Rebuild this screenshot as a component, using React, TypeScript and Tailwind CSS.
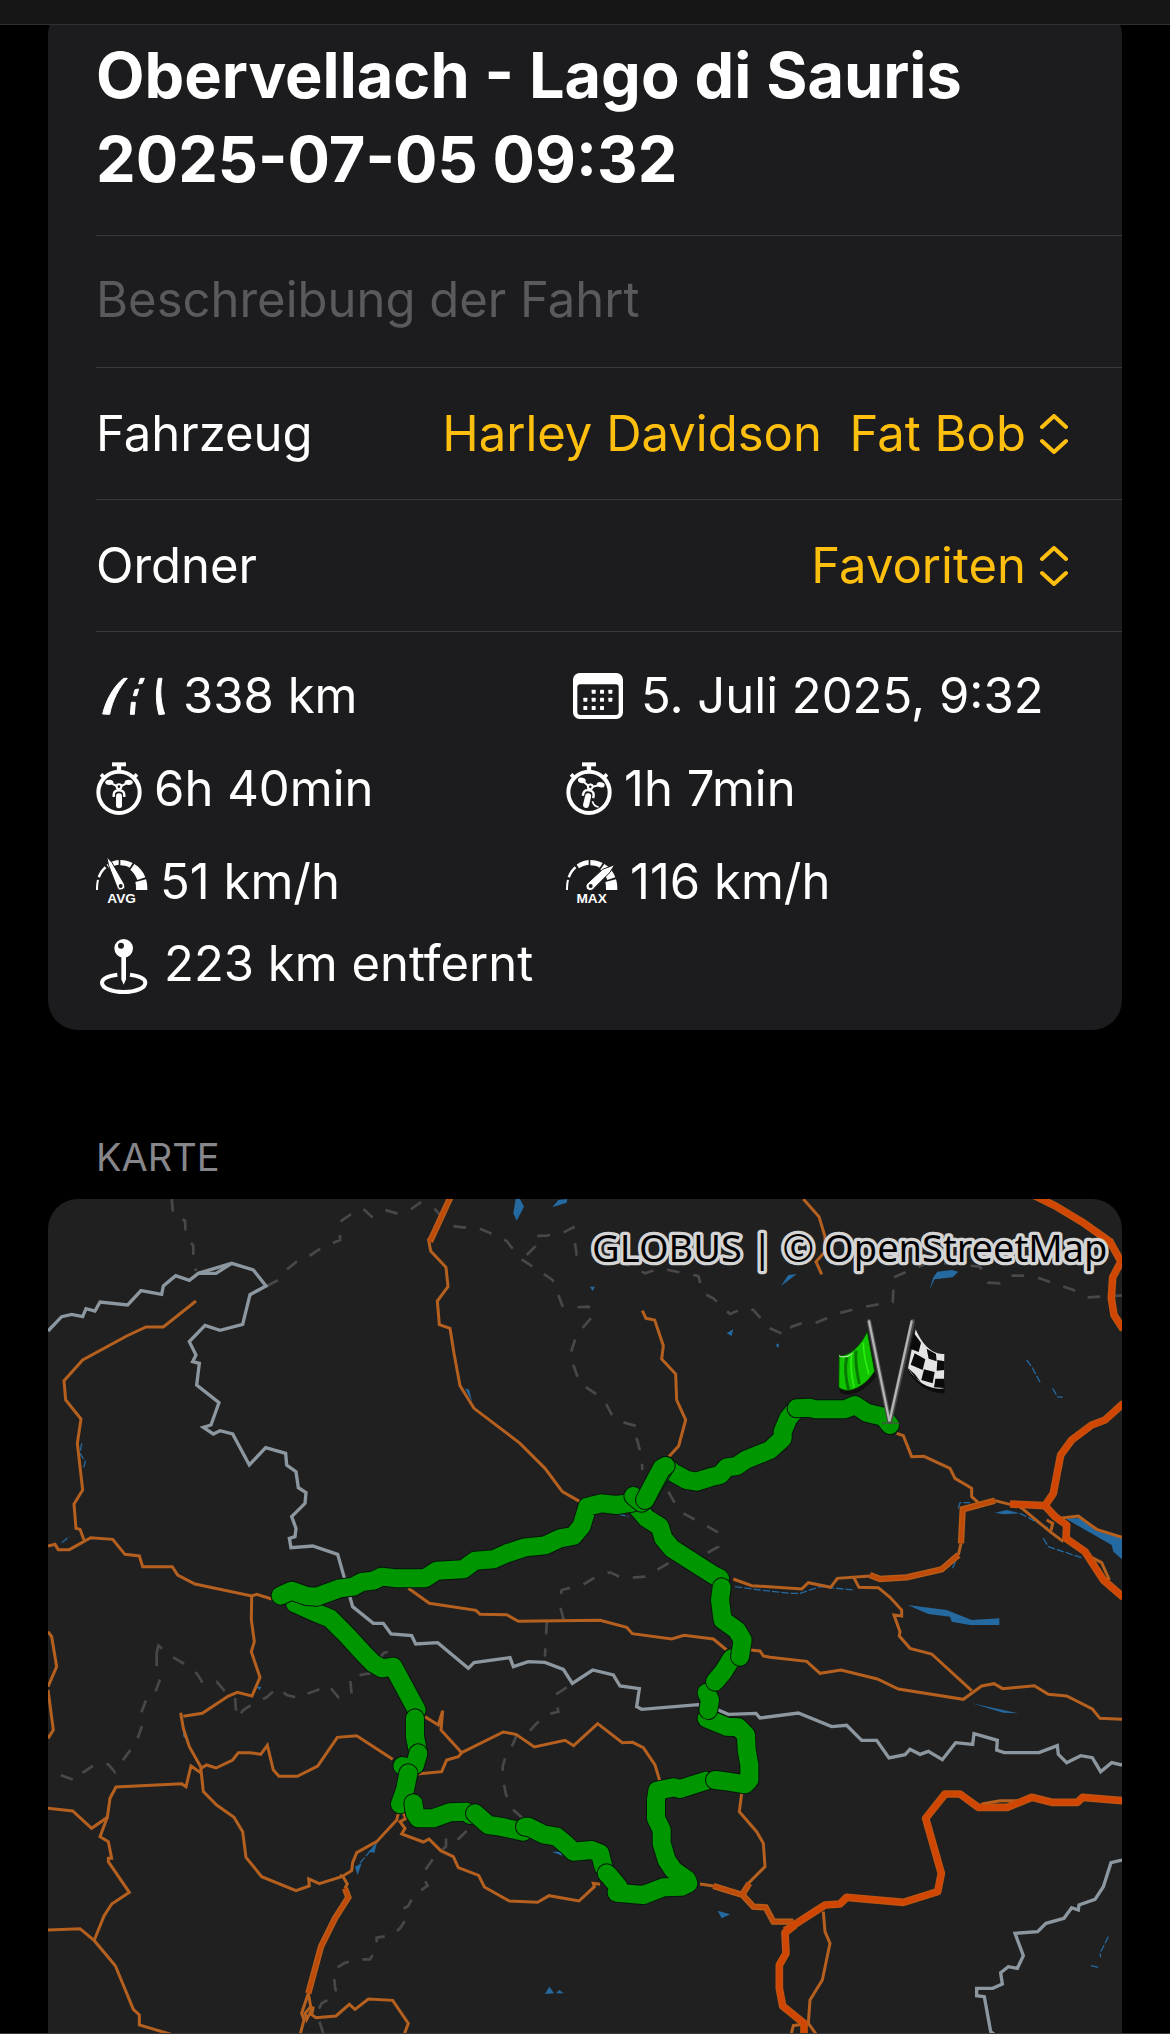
import React from 'react';

const minorRoads = [
  '468,333 370,411 318,411 260,438 128,510 72,572 77,630 123,687 112,760 128,900 102,942 108,1015 120,1018 132,1050',
  '24,1068 45,1063 55,1079 88,1079 152,1043 218,1048 255,1093 298,1098 308,1130 397,1130 413,1155 465,1182 635,1218 650,1213 695,1227',
  '635,1218 634,1290 643,1355 634,1385 660,1462 636,1518 592,1507 565,1518 487,1570 430,1579',
  '422,1568 430,1615 448,1670 482,1730 490,1805 530,1845 582,1882 608,1925 618,2002 665,2060 768,2102 808,2088 806,2067 838,2081 905,2060 935,2042 938,2018 950,1988 1010,1955 1070,1890 1075,1870',
  '24,1325 35,1340 50,1430 24,1490',
  '24,1500 40,1620 24,1645',
  '482,1735 500,1725 528,1734 578,1710 595,1688 630,1688 662,1693 682,1666 700,1740 717,1759 772,1759 833,1728 892,1642 950,1637 1058,1708',
  '482,1748 453,1728 438,1790 425,1781 228,1791 210,1825 202,1882 155,1915 98,1863 24,1855',
  '202,1882 180,1940 205,1955 215,2005 205,2005 205,2015 268,2107 215,2142 192,2178 163,2250',
  '24,2220 120,2216 163,2252 226,2327 280,2458 298,2475 298,2505 400,2535',
  '1090,1870 1098,1885 1080,1895 1095,1915 1085,1932 1150,1956 1167,1947 1202,1982 1240,2000 1255,2033 1316,2056 1333,2091 1408,2133 1493,2137 1527,2117 1617,2133 1663,2090 1660,2080 1680,2083',
  '900,2055 910,2062 922,2082 915,2095',
  '805,2410 785,2470 792,2490 780,2535',
  '805,2410 812,2450 795,2470 800,2488 820,2450 815,2474 828,2483 888,2478 928,2443 945,2458 985,2427 1058,2431 1105,2500 1092,2535',
  '1155,1580 1195,1605 1208,1562 1203,1620 1265,1688 1390,1626 1428,1633 1483,1671 1575,1651 1601,1667 1673,1601 1747,1658 1778,1657 1810,1673 1845,1725 1860,1775',
  '1265,1688 1255,1700 1220,1710 1205,1745 1130,1752',
  '1165,145 1172,183 1218,232 1224,290 1192,333 1198,404 1230,415 1242,490 1260,587 1302,655 1440,760 1515,835 1567,905 1620,935',
  '1807,362 1818,385 1844,390 1870,467 1865,507 1907,552 1910,630 1937,690 1916,768 1885,802',
  '1105,1195 1168,1240 1308,1261 1320,1273 1400,1274 1435,1294 1680,1291 1760,1312 1777,1331 1895,1347 1932,1336 2020,1347 2060,1380',
  '2130,1380 2160,1383 2170,1398 2190,1402 2300,1414 2340,1450 2403,1440 2512,1467 2575,1497 2770,1528 2825,1488 2862,1481 2888,1496 2983,1487 3025,1513 3080,1518 3157,1557 3180,1585 3246,1588',
  '2440,1160 2457,1192 2515,1193 2550,1222 2585,1260 2585,1278 2562,1275 2580,1325 2578,1338 2610,1375 2675,1392 2795,1502',
  '2080,1167 2135,1187 2285,1197 2305,1178 2372,1192 2392,1165 2490,1158',
  '2755,1095 2763,1060',
  '2865,932 2910,943',
  '2570,730 2590,737 2615,800 2652,799 2730,835 2745,865 2795,895 2795,920 2815,938',
  '2930,945 2950,958 3030,1025 3070,1055',
  '3020,990 3038,1000 3033,1022',
  '3060,985 3115,978 3170,1018 3246,1042',
  '3150,1100 3185,1118 3208,1170',
  '2290,27 2337,80 2355,140 2355,185 2328,215 2345,253',
  '2105,1810 2098,1865 2150,1925 2170,1960 2175,2030 2125,2080',
  '1980,2082 2020,2088',
  '2350,2165 2355,2225 2370,2260 2347,2370 2310,2430 2305,2500 2330,2535',
  '2253,2535 2260,2507 2290,2502',
  '2825,1842 2880,1832 2940,1832',
];

const primaryRoads = [
  '1232,20 1170,155',
  '915,2095 925,2122 885,2185 843,2270 805,2410',
  '2490,1155 2520,1167 2600,1162 2705,1138 2755,1095',
  '2763,1060 2768,958 2865,932',
  '2128,2080 2108,2112',
  '2020,2088 2108,2115 2140,2150 2177,2152 2200,2195 2260,2195',
];

const motorways = [
  '2910,942 3015,947 3040,910 3062,795 3095,750 3155,705 3195,690 3250,640',
  '3015,947 3045,980 3080,1005 3078,1045 3135,1085 3190,1170 3250,1222',
  '2980,15 3050,50 3125,95 3210,155 3243,215 3218,262 3214,325 3222,375 3250,418',
  '2265,2205 2235,2228 2238,2290 2218,2325 2218,2395 2228,2448 2292,2500 2292,2535',
  '2235,2222 2355,2145 2400,2142 2420,2122 2590,2137 2693,2105 2704,2050 2657,1885 2715,1812 2760,1812 2815,1852 2902,1852 2975,1822 3035,1837 3112,1837 3128,1822 3250,1832',
];

const borders = [
  '24,423 65,380 95,373 128,380 138,356 165,363 180,336 263,345 303,302 365,313 370,288 407,257 448,271 475,250 575,220 640,240 678,288 630,314 608,403 540,421 495,406 448,455 468,495 458,515 478,520 470,585 537,638 513,705 490,712 520,732 540,722 578,732 628,825 677,773 737,790 740,825 768,845 775,893 798,908 795,940 755,980 768,1015 765,1040 748,1045 753,1073 818,1068 893,1093 912,1160 928,1215 938,1250 1000,1300 1030,1300 1053,1332 1115,1337 1127,1362 1193,1358 1285,1435 1302,1418 1410,1403 1420,1430 1465,1415 1515,1417 1570,1438 1597,1480 1658,1440 1720,1455 1740,1488 1798,1496 1790,1550 1805,1558 1975,1544 2035,1560 2065,1573 2148,1570 2160,1584 2275,1569 2375,1610 2420,1606 2465,1651 2510,1651 2547,1704 2595,1694 2610,1678 2640,1693 2665,1684 2707,1709 2747,1658 2798,1663 2802,1631 2872,1651 2870,1680 2893,1688 2997,1688 3052,1667 3055,1693 3080,1718 3122,1697 3157,1703 3182,1745 3215,1718 3246,1725',
  '475,250 528,250 575,220',
  '3246,2010 3213,2018 3190,2090 3165,2128 3117,2145 3115,2160 3095,2153 3072,2185 3018,2200 2993,2225 2925,2230 2950,2297 2932,2335 2905,2330 2882,2348 2887,2382 2858,2395 2810,2395 2810,2417 2833,2420 2852,2525 2865,2535',
];

const regionBorders = [
  '395,27 400,77 435,92 437,135 460,168 460,205 468,243',
  '680,288 715,270 745,235 770,215 805,200 835,180 870,163 900,150 900,95 930,75 968,55 995,80 1035,60 1070,70 1110,60 1140,38 1185,58 1230,107 1267,112 1310,112 1345,127 1400,153 1440,205 1538,270 1567,347 1605,352 1645,350 1665,370 1610,435 1590,495 1600,525 1620,580 1680,620 1700,645 1720,683 1750,697 1795,710 1790,745 1805,800 1807,840',
  '1885,905 1903,937 1930,970 2000,1008 2035,1028 2035,1070 2000,1090 1885,1120 1815,1160 1750,1165 1710,1147 1670,1160 1630,1183 1565,1200 1558,1240 1570,1285 1520,1300 1515,1400',
  '1460,195 1485,170 1480,138 1520,137 1570,128 1600,112 1605,160 1610,195 1655,195 1780,230 1815,250 1860,235 1975,258 1990,310 2020,325 2070,372 2110,355 2140,360 2190,415 2240,437 2255,410 2290,398 2325,400 2395,370 2475,350 2558,336 2560,300 2555,265 2670,215 2820,230 2845,278 2880,280 2910,257 2945,257 2990,262 3100,300 3145,322 3246,316',
  '350,1390 355,1367 400,1402 430,1420 470,1450 488,1478 530,1475 553,1502 585,1515 587,1550 592,1585 610,1560 650,1535 680,1522 712,1492 740,1515 780,1525 805,1510 845,1495 865,1485 895,1522 935,1515 930,1460 990,1450 1030,1390 1065,1377',
  '350,1390 350,1435 360,1468 343,1515 318,1530 305,1565 307,1605 293,1645 275,1675 245,1715 225,1747 205,1723 165,1723 130,1747 110,1773 60,1755 30,1773',
  '1580,1492 1545,1515 1555,1565 1525,1573 1490,1600 1465,1627 1430,1635 1420,1660 1398,1695 1388,1730 1390,1775 1398,1813 1415,1855 1448,1885',
  '1280,1923 1252,1950 1218,1940 1218,1970 1190,1990 1170,2020 1145,2055 1163,2087 1122,2115 1105,2148 1083,2160 1092,2197 1080,2215 1058,2235 1010,2243 1010,2275 990,2308 950,2308 912,2320 880,2340 885,2390 890,2415 845,2440 830,2470 850,2530',
];

const lakes = [
  '1427,27 1440,27 1452,50 1430,92 1420,70',
  '1537,52 1555,30 1582,27 1580,38',
  '2223,287 2245,255 2270,252 2240,275',
  '2668,300 2680,262 2692,245 2735,240 2755,245 2738,262 2684,268',
  '1650,290 1665,290 1658,303',
  '2060,430 2080,418 2075,438',
  '2208,465 2213,460 2218,466 2213,474',
  '1275,595 1288,600 1296,635',
  '3075,985 3120,985 3170,1022 3246,1045 3246,1108 3220,1085 3215,1065',
  '2865,968 2900,960 2940,970 2890,973',
  '2603,1245 2720,1260 2795,1290 2878,1285 2878,1305 2790,1305 2735,1295 2730,1280 2665,1272',
  '2795,1540 2935,1570 2890,1568',
  '945,2030 965,2020 953,2055',
  '985,1985 1010,1962 1003,1988',
  '1535,1985 1565,1985 1567,1997',
  '2033,2162 2070,2173 2045,2185',
  '1515,2412 1528,2390 1542,2410',
  '1548,2410 1558,2400 1572,2410',
  '428,1620 432,1622 436,1645 430,1640',
  '650,1490 665,1490 658,1500',
];

const rivers = [
  '2960,510 2975,530 3002,580',
  '3038,595 3052,620 3068,622',
  '3010,1045 3025,1070 3130,1105',
  '2755,955 2760,938 2790,938',
  '2940,970 3025,1015',
  '2085,1190 2160,1200 2250,1210 2280,1210 2340,1190 2440,1200',
  '1010,1960 955,2025',
  '3205,2240 3180,2290 3182,2302',
  '3153,2327 3175,2332',
  '1735,972 1765,980',
  '65,1058 88,1040',
  '125,760 120,790 136,815 130,835',
  '2738,1135 2750,1105',
];

// each leg is drawn with its own casing so that the joints stay visible
const routeLegs = [
  '1790,950 1820,985 1860,1010 1870,1045 1895,1075 2020,1155 2040,1165',
  '2300,653 2270,655 2245,685 2228,725 2228,745 2190,780 2120,808 2090,828 2060,832 2040,855 2010,862 1970,875 1940,870 1900,848 1877,828',
  '2550,705 2530,680 2480,668 2445,645 2415,658 2325,658 2310,653 2270,655',
  '765,1240 820,1265 870,1285 920,1335 975,1395 1000,1420 1025,1435 1060,1430 1130,1560',
  '722,1217 755,1202 800,1218 830,1220 900,1195 940,1190 965,1176 1000,1172 1025,1160 1070,1165 1155,1165 1190,1142 1270,1138 1305,1112 1360,1108 1400,1090 1455,1072 1515,1066 1560,1045 1600,1038 1625,1008 1642,950 1685,940 1730,945 1777,938 1780,920',
  '1868,840 1815,930 1805,938 1780,918',
  '1877,828 1865,835 1815,930',
  '1125,1585 1125,1640 1135,1690 1125,1725',
  '1135,1690 1125,1725 1105,1735 1087,1728',
  '1105,1750 1095,1800 1080,1843',
  '1120,1840 1125,1870 1135,1885 1180,1885 1230,1867 1280,1865 1290,1875',
  '1305,1870 1345,1905 1380,1910 1450,1925',
  '1455,1910 1465,1910 1510,1933 1550,1940 1580,1965 1600,1985 1655,1980 1680,1990 1690,2030',
  '1700,2050 1710,2060 1735,2090 1730,2108 1810,2115 1870,2092 1925,2090 1945,2080 1940,2068 1900,2040 1880,2010 1865,1960 1865,1920 1848,1885 1848,1830 1852,1802 1900,1792 1920,1797 1995,1773 2000,1772',
  '2025,1770 2065,1775 2115,1783 2128,1770 2128,1725 2120,1680 2118,1635 2095,1612 2060,1610 2000,1585',
  '2005,1560 2010,1530 2000,1508',
  '2025,1475 2050,1445 2075,1405 2100,1400',
  '2100,1400 2108,1350 2090,1320 2048,1290 2040,1230 2045,1192',
];

const RoadIcon = () => (
  <svg viewBox="18 18 225 180" className="h-[60px] w-[75px] shrink-0 fill-white stroke-white" strokeWidth="3" strokeLinejoin="round" aria-hidden="true">
    <path d="M38 162C48 118 74 76 101 55L112 55C88 82 67 120 59 163Z" />
    <path d="M151 55L163 55L157 70L146 72Z" />
    <path d="M135 89L146 87L140 107L130 107Z" />
    <path d="M124 127L136 127L133 163L121 163Z" />
    <path d="M205 55L216 55C209 92 212 128 224 162L207 164C197 128 197 92 205 55Z" />
  </svg>
);

const CalendarIcon = () => (
  <svg viewBox="18 18 189 180" className="h-[60px] w-[63px] shrink-0" aria-hidden="true">
    <rect x="39" y="39" width="150" height="138" rx="20" fill="#fff" />
    <rect x="52" y="73" width="124" height="92" rx="9" fill="#1c1c1e" />
    <g fill="#fff">
      <rect x="95" y="89" width="12" height="12" rx="2" />
      <rect x="120" y="89" width="12" height="12" rx="2" />
      <rect x="145" y="89" width="12" height="12" rx="2" />
      <rect x="70" y="113" width="12" height="12" rx="2" />
      <rect x="95" y="113" width="12" height="12" rx="2" />
      <rect x="120" y="113" width="12" height="12" rx="2" />
      <rect x="145" y="113" width="12" height="12" rx="2" />
      <rect x="70" y="138" width="12" height="12" rx="2" />
      <rect x="95" y="138" width="12" height="12" rx="2" />
      <rect x="120" y="138" width="12" height="12" rx="2" />
    </g>
  </svg>
);

const StopwatchIcon = ({ parked = false }: { parked?: boolean }) => (
  <svg viewBox="18 297 138 180" className="h-[60px] w-[46px] shrink-0" fill="none" stroke="#fff" aria-hidden="true">
    <circle cx="87" cy="397" r="62" strokeWidth="12" />
    <path d="M66 313H108" strokeWidth="12" />
    <path d="M87 315V334" strokeWidth="13" />
    <path d="M33 343L46 356M141 343L128 356" strokeWidth="11" />
    <g transform={parked ? 'rotate(13 87 397)' : undefined}>
      <ellipse cx="58" cy="367" rx="12" ry="8" fill="#fff" stroke="none" />
      <ellipse cx="116" cy="367" rx="12" ry="8" fill="#fff" stroke="none" />
      <path d="M66 371L80 378M108 371L94 378" strokeWidth="6" />
      <circle cx="87" cy="380" r="7" strokeWidth="6" />
      <path d="M71 411C70 393 78 391 87 391C96 391 104 393 103 411" strokeWidth="7" />
      <rect x="78" y="400" width="18" height="45" rx="9" fill="#fff" stroke="none" />
    </g>
    {parked && <path d="M97 424C101 436 106 441 116 441" strokeWidth="5" />}
  </svg>
);

const GaugeIcon = ({ label }: { label: 'AVG' | 'MAX' }) => (
  <svg viewBox="18 576 156 180" className="h-[60px] w-[52px] shrink-0 fill-white" aria-hidden="true">
    <path d="M18 690C18 677 19 667 21 659L27 660C25 669 24 678 24 690Z" />
    <path d="M23 650C28 637 35 627 44 619L49 625C40 633 34 642 30 653Z" />
    <path d="M50 614C61 606 72 601 86 600L86 614C75 615 66 619 57 625Z" />
    <path d="M91 600C104 600 116 603 128 609L119 623C110 618 101 616 91 616Z" />
    <path d="M133 612C148 621 160 635 166 652L142 660C138 648 131 637 121 629Z" />
    <path d="M168 658C171 668 172 678 172 690H138C138 680 138 674 136 666Z" />
    {label === 'AVG' ? (
      <path d="M50 590L66 608L103 672A12 12 0 0 1 82 684L56 617Z" stroke="#1c1c1e" strokeWidth="3" />
    ) : (
      <path d="M164 614L150 637L101 686A12 12 0 0 1 80 672L128 628Z" stroke="#1c1c1e" strokeWidth="3" />
    )}
    <circle cx="92" cy="678" r="6" fill="#1c1c1e" />
    <text x="95" y="730" textAnchor="middle" fontSize="41" fontWeight="700" fontFamily="'Liberation Sans', sans-serif">
      {label}
    </text>
  </svg>
);

const PinIcon = () => (
  <svg viewBox="18 822 168 180" className="h-[60px] w-[56px] shrink-0 fill-white" aria-hidden="true">
    <path fillRule="evenodd" d="M101 837A28 28 0 1 0 101 893A28 28 0 1 0 101 837ZM93 848A9 9 0 1 1 93 866A9 9 0 1 1 93 848Z" />
    <path d="M94 888H108V958L101 974L94 958Z" />
    <path d="M82 944C52 948 36 957 36 968C36 984 65 996 101 996C137 996 166 984 166 968C166 957 150 948 120 944" fill="none" stroke="#fff" strokeWidth="12" />
  </svg>
);

const ChevronUpDown = () => (
  <svg viewBox="0 0 32 40" className="pointer-events-none h-10 w-8 shrink-0" fill="none" stroke="#ffbf0f" strokeWidth="4" strokeLinecap="round" strokeLinejoin="round" aria-hidden="true">
    <path d="M4 13L16 2L28 13M4 27L16 38L28 27" />
  </svg>
);

const Flags = () => (
  <g transform="translate(2340 330)">
    <path d="M143 97C125 135 95 170 58 172L57 268C90 290 135 262 166 222Z" fill="#000" opacity=".5" transform="translate(2 8)" />
    <path d="M142 93C122 138 88 170 57 166L56 262C88 288 138 256 164 214Z" fill="#12c400" stroke="#0a3a05" strokeWidth="3" />
    <path d="M80 172C74 200 78 240 86 270M108 152C104 190 112 220 118 252" stroke="#067a00" strokeWidth="9" fill="none" />
    <path d="M94 166C90 200 96 235 102 262M130 128C130 165 138 190 146 222" stroke="#2bef10" strokeWidth="5" fill="none" />
    <path d="M57 167C66 173 84 172 98 160" stroke="#d8f5d0" strokeWidth="3" fill="none" />
    <path d="M285 95C305 135 335 172 374 166L374 274C335 276 285 248 264 206Z" fill="#000" opacity=".6" transform="translate(0 6)" />
    <path d="M287 88C305 130 335 165 373 162L372 265C335 272 290 250 264 205Z" fill="#e4e4e4" />
    <g fill="#0b0b0b">
      <path d="M282 100L303 128L296 156L270 146Z" />
      <path d="M284 160L316 178L308 210L272 194Z" />
      <path d="M320 146L348 162L350 184L326 176Z" />
      <path d="M352 180L374 184L373 210L350 212Z" />
      <path d="M312 208L344 216L338 250L304 240Z" />
      <path d="M264 204L284 222L302 246L284 232Z" />
      <path d="M346 236L372 236L372 264L342 262Z" />
    </g>
    <path d="M147 64L208 362" stroke="#4b4b4b" strokeWidth="14" strokeLinecap="round" />
    <path d="M278 64L210 362" stroke="#4b4b4b" strokeWidth="14" strokeLinecap="round" />
    <path d="M147 64L208 362M275 64L209 362" stroke="#b4b4b4" strokeWidth="7" strokeLinecap="round" />
    <path d="M186 370H238" stroke="#3d5a3d" strokeWidth="4" />
  </g>
);

const RouteMap = () => (
  <svg viewBox="24 27 3222 2502" className="block w-full bg-[#202020]" fill="none" role="img" aria-label="Karte">
    <g stroke="#484848" strokeWidth="8" strokeDasharray="38 42">
      {regionBorders.map((points) => <polyline key={points} points={points} />)}
    </g>
    <g fill="#2469a0">
      {lakes.map((points) => <polygon key={points} points={points} />)}
    </g>
    <g stroke="#2469a0" strokeWidth="4" strokeDasharray="22 6">
      {rivers.map((points) => <polyline key={points} points={points} />)}
    </g>
    <g stroke="#8d979f" strokeWidth="10">
      {borders.map((points) => <polyline key={points} points={points} />)}
    </g>
    <g stroke="#b5601f" strokeWidth="9">
      {minorRoads.map((points) => <polyline key={points} points={points} />)}
    </g>
    <g stroke="#b85c18" strokeWidth="19">
      {primaryRoads.map((points) => <polyline key={points} points={points} />)}
    </g>
    <g stroke="#c04a08" strokeWidth="10">
      {primaryRoads.map((points) => <polyline key={points} points={points} />)}
    </g>
    <g stroke="#c25310" strokeWidth="23" strokeLinejoin="round">
      {motorways.map((points) => <polyline key={points} points={points} />)}
    </g>
    <g stroke="#d04602" strokeWidth="15">
      {motorways.map((points) => <polyline key={points} points={points} />)}
    </g>
    {routeLegs.map((points) => (
      <g key={points} strokeLinecap="round" strokeLinejoin="round">
        <polyline points={points} stroke="#04170a" strokeWidth="60" />
        <polyline points={points} stroke="#009600" strokeWidth="54" />
      </g>
    ))}
    <Flags />
    <text
      x="3202"
      y="217"
      textAnchor="end"
      fontSize="114"
      fontFamily="'Noto Sans', sans-serif"
      fill="#000"
      stroke="#d4d4d4"
      strokeWidth="20"
      strokeLinejoin="round"
      paintOrder="stroke"
    >
      GLOBUS | © OpenStreetMap
    </text>
  </svg>
);

interface SelectRowProps {
  id: string;
  label: string;
  value: string;
}

const SelectRow: React.FC<SelectRowProps> = ({ id, label, value }) => (
  <div className="ml-12 flex h-[132px] items-center border-b border-[#38383a] pr-[52px]">
    <label htmlFor={id}>{label}</label>
    <div className="ml-auto flex items-center gap-3">
      <select id={id} className="appearance-none bg-transparent text-right text-[#ffbf0f] outline-none">
        <option>{value}</option>
      </select>
      <ChevronUpDown />
    </div>
  </div>
);

const Stat: React.FC<{ icon: React.ReactNode; value: string }> = ({ icon, value }) => (
  <div className="flex h-[60px] items-center gap-3 whitespace-nowrap">
    {icon}
    <span>{value}</span>
  </div>
);

const App: React.FC = () => {
  return (
    <div className="min-h-screen border-b border-[#3a3a3c] bg-black font-['Inter',sans-serif] text-[49px] leading-[60px] text-white">
      <header className="relative z-10 h-[25px] border-b border-[#303032] bg-[#161617]" />

      <main className="px-12">
        {/* Trip details */}
        <section className="-mt-5 rounded-[30px] bg-[#1c1c1e]">
          <div className="ml-12 border-b border-[#38383a] pt-7 pb-[34px]">
            <h1 className="text-[63px] leading-[84px] font-bold">
              Obervellach - Lago di Sauris
              <br />
              2025-07-05 09:32
            </h1>
          </div>
          <div className="ml-12 flex h-[132px] items-center border-b border-[#38383a] pr-12 pb-1">
            <input
              type="text"
              aria-label="Beschreibung der Fahrt"
              placeholder="Beschreibung der Fahrt"
              className="w-full bg-transparent outline-none placeholder:text-[#5a5a5e]"
            />
          </div>
          <SelectRow id="vehicle" label="Fahrzeug" value={'Harley Davidson \u00a0Fat Bob'} />
          <SelectRow id="folder" label="Ordner" value="Favoriten" />

          <div className="pt-[34px] pr-[86px] pb-9 pl-12">
            <div className="grid grid-cols-2 gap-y-[33px]">
              <Stat icon={<RoadIcon />} value="338 km" />
              <Stat icon={<CalendarIcon />} value="5. Juli 2025, 9:32" />
              <Stat icon={<StopwatchIcon />} value="6h 40min" />
              <Stat icon={<StopwatchIcon parked />} value="1h 7min" />
              <Stat icon={<GaugeIcon label="AVG" />} value="51 km/h" />
              <Stat icon={<GaugeIcon label="MAX" />} value="116 km/h" />
            </div>
            <div className="mt-[22px]">
              <Stat icon={<PinIcon />} value="223 km entfernt" />
            </div>
          </div>
        </section>

        {/* Map */}
        <section className="mt-[103px]">
          <h2 className="mb-[18px] ml-12 text-[38px] leading-[48px] text-[#86868b]">KARTE</h2>
          <div className="overflow-hidden rounded-t-[30px]">
            <RouteMap />
          </div>
        </section>
      </main>
    </div>
  );
};

export default App;
